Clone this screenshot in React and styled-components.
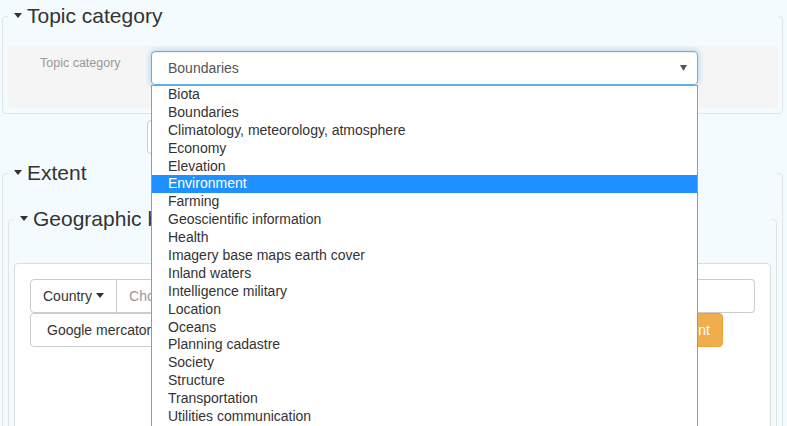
import styled, { createGlobalStyle } from "styled-components"

const GlobalStyle = createGlobalStyle`
    html, body {
        margin: 0;
        padding: 0;
    }
    body {
        background: #f4fbfe;
        font-family: "Liberation Sans", Arial, sans-serif;
        font-size: 14px;
        color: #333;
        overflow: hidden;
    }
`

const Page = styled.div`
    height: 426px;
    overflow: hidden;
    padding: 0 4px 0 2px;
`

const Fieldset = styled.fieldset`
    margin: ${p => p.$top}px 0 0;
    padding: 0 ${p => p.$right}px 5px 5px;
    border: 1px solid #e1e5e7;
    border-radius: 4px;
    min-width: 0;
`

const Legend = styled.legend`
    box-sizing: border-box;
    width: 100%;
    padding: 0 0 0 6px;
    font-size: 21px;
    line-height: 24px;
    color: #333;
`

const Caret = styled.span`
    display: inline-block;
    width: 0;
    height: 0;
    border-left: ${p => p.$size}px solid transparent;
    border-right: ${p => p.$size}px solid transparent;
    border-top: ${p => p.$size + 1}px solid ${p => p.$color || "#333"};
    vertical-align: middle;
    margin: 0 ${p => p.$gap}px 0 ${p => p.$left || 0}px;
    position: relative;
    top: -2px;
`

const Well = styled.div`
    margin-top: 18px;
    padding: 5px 80px 23px 0;
    background: #f5f5f5;
    border-radius: 4px;
    display: grid;
    grid-template-columns: 143px 1fr;
`

const Label = styled.label`
    padding: 5px 0 0 32px;
    font-size: 12.5px;
    color: #999;
`

const SelectWrap = styled.div`
    position: relative;
`

const SelectBox = styled.div`
    box-sizing: border-box;
    height: 34px;
    padding: 0 16px;
    display: flex;
    align-items: center;
    justify-content: space-between;
    background: #fff;
    color: #555;
    border: 1px solid #66afe9;
    border-radius: 4px;
    box-shadow: inset 0 1px 1px rgba(0, 0, 0, .075), 0 0 6px rgba(102, 175, 233, .6);
`

const SelectArrow = styled.svg`
    width: 7px;
    height: 6px;
    margin-right: -6px;
`

const Options = styled.ul`
    position: absolute;
    z-index: 10;
    top: 100%;
    left: 0;
    right: 0;
    margin: 0;
    padding: 0;
    list-style: none;
    background: #fff;
    border: 1px solid #7c9ed6;
`

const Option = styled.li`
    height: 17.9px;
    line-height: 17.9px;
    padding-left: 16px;
    font-size: 14px;
    color: ${p => p.$active ? "#fff" : "#333"};
    background: ${p => p.$active ? "#1e90ff" : "transparent"};
    white-space: nowrap;
`

const Button = styled.button`
    box-sizing: border-box;
    height: 34px;
    padding: 0 ${p => p.$pad || 12}px;
    font: inherit;
    font-size: 14px;
    color: #333;
    background: #fff;
    border: 1px solid #ccc;
    border-radius: 4px;
    white-space: nowrap;
`

const AddRow = styled.div`
    margin: 6px 0 0 145px;
`

const Panel = styled.div`
    margin-top: 32px;
    padding: 15px;
    min-height: 260px;
    background: #fff;
    border: 1px solid #ddd;
    border-radius: 4px;
`

const InputGroup = styled.div`
    display: flex;
    height: 34px;
`

const GroupButton = styled(Button)`
    border-radius: 4px 0 0 4px;
`

const GroupInput = styled.div`
    flex: 1;
    box-sizing: border-box;
    height: 34px;
    padding-left: 12px;
    display: flex;
    align-items: center;
    color: #999;
    border: 1px solid #ccc;
    border-left: none;
    border-radius: 0 4px 4px 0;
`

const ToolRow = styled.div`
    display: flex;
    justify-content: space-between;
    padding-right: 32px;
`

const WarnButton = styled(Button)`
    color: #fff;
    background: #f0ad4e;
    border-color: #eea236;
`

const topics = [
    "Biota",
    "Boundaries",
    "Climatology, meteorology, atmosphere",
    "Economy",
    "Elevation",
    "Environment",
    "Farming",
    "Geoscientific information",
    "Health",
    "Imagery base maps earth cover",
    "Inland waters",
    "Intelligence military",
    "Location",
    "Oceans",
    "Planning cadastre",
    "Society",
    "Structure",
    "Transportation",
    "Utilities communication",
]

export default function App() {
    return (
        <Page>
            <GlobalStyle />
            <Fieldset $top={4} $right={4}>
                <Legend><Caret $size={4.5} $gap={5} />Topic category</Legend>
                <Well>
                    <Label>Topic category</Label>
                    <SelectWrap>
                        <SelectBox>
                            Boundaries
                            <SelectArrow viewBox="0 0 7 6">
                                <path d="M0 0 H7 L3.5 6 Z" fill="#555" />
                            </SelectArrow>
                        </SelectBox>
                        <Options>
                            {topics.map(t => (
                                <Option key={t} $active={t === "Environment"}>{t}</Option>
                            ))}
                        </Options>
                    </SelectWrap>
                </Well>
            </Fieldset>
            <AddRow>
                <Button>Add topic category</Button>
            </AddRow>
            <Fieldset $top={7} $right={5}>
                <Legend><Caret $size={4.5} $gap={5} />Extent</Legend>
                <Fieldset $top={22} $right={5}>
                    <Legend><Caret $size={4.5} $gap={5} />Geographic bounding box</Legend>
                    <Panel>
                        <InputGroup>
                            <GroupButton>Country<Caret $size={4} $gap={0} $left={4} /></GroupButton>
                            <GroupInput>Choose a country</GroupInput>
                        </InputGroup>
                        <ToolRow>
                            <Button $pad={16}>Google mercator</Button>
                            <WarnButton>Add extent</WarnButton>
                        </ToolRow>
                    </Panel>
                </Fieldset>
            </Fieldset>
        </Page>
    )
}
